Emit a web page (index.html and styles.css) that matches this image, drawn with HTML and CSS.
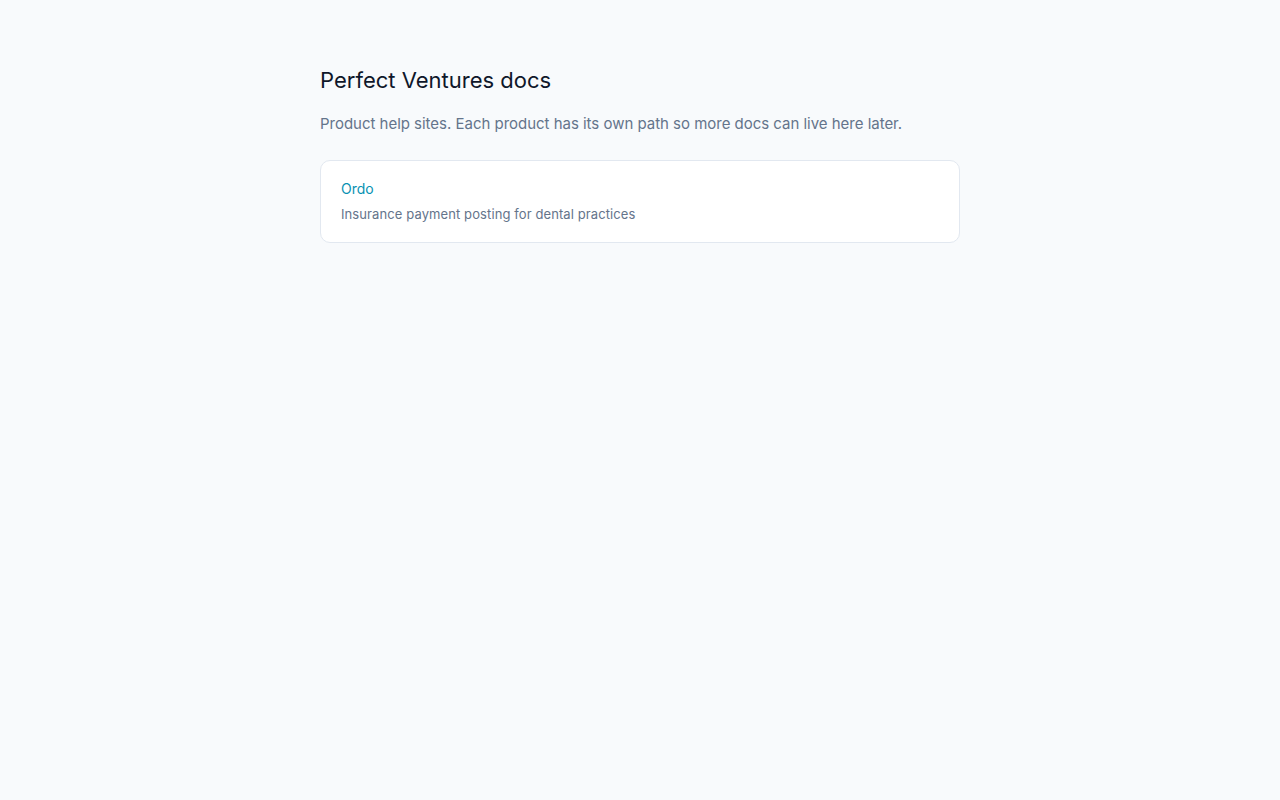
FILE: index.html
```html
<!DOCTYPE html>
<html lang="en">
<head>
<meta charset="utf-8">
<title>Perfect Ventures docs</title>
<link rel="stylesheet" href="styles.css">
</head>
<body>
<main class="page">
  <h1 class="title">Perfect Ventures docs</h1>
  <p class="lead">Product help sites. Each product has its own path so more docs can live here later.</p>
  <ul class="list">
    <li>
      <a class="card" href="#">
        <span class="card-name">Ordo</span>
        <span class="card-desc">Insurance payment posting for dental practices</span>
      </a>
    </li>
  </ul>
</main>
</body>
</html>
```

FILE: styles.css
```css
html, body {
  margin: 0;
  padding: 0;
  background: #f8fafc;
}
body {
  font-family: Inter, "Noto Sans", sans-serif;
  color: #0f172a;
}
.page {
  max-width: 640px;
  margin: 0 auto;
  padding: 64px 0;
}
.title {
  margin: 0;
  font-size: 22px;
  font-weight: 400;
  line-height: 32px;
  color: #0f172a;
}
.lead {
  margin: 16px 0 0;
  font-size: 15px;
  line-height: 24px;
  letter-spacing: -0.02px;
  color: #64748b;
}
.list {
  list-style: none;
  margin: 24px 0 0;
  padding: 0;
}
.card {
  display: flex;
  flex-direction: column;
  gap: 5px;
  padding: 18px 20px;
  background: #ffffff;
  border: 1px solid #e2e8f0;
  border-radius: 10px;
  text-decoration: none;
}
.card-name {
  font-size: 14px;
  line-height: 20px;
  color: #0891b2;
}
.card-desc {
  font-size: 13px;
  line-height: 20px;
  letter-spacing: 0.1px;
  color: #64748b;
}
```
